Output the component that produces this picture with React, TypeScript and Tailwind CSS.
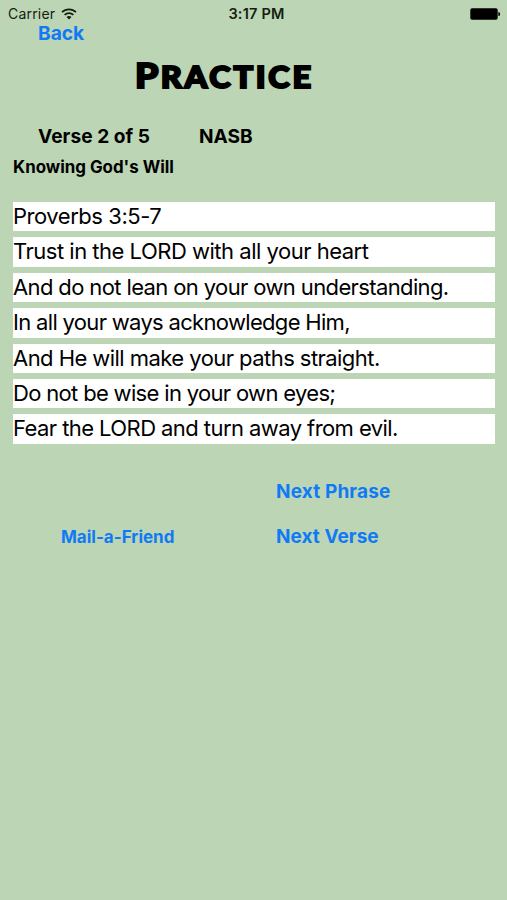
const lines = [
  { text: "Proverbs 3:5-7", spacing: "tracking-[-0.46px]" },
  { text: "Trust in the LORD with all your heart", spacing: "tracking-[-0.49px]" },
  { text: "And do not lean on your own understanding.", spacing: "tracking-[-0.62px]" },
  { text: "In all your ways acknowledge Him,", spacing: "tracking-[-0.68px]" },
  { text: "And He will make your paths straight.", spacing: "tracking-[-0.55px]" },
  { text: "Do not be wise in your own eyes;", spacing: "tracking-[-0.67px]" },
  { text: "Fear the LORD and turn away from evil.", spacing: "tracking-[-0.57px]" },
];

function WifiIcon() {
  return (
    <svg width="16" height="12" viewBox="0 0 16 12" fill="none" stroke="#14200f" strokeWidth="1.7">
      <path d="M1 4.2C4.9 0.3 11.1 0.3 15 4.2" />
      <path d="M3.6 6.9C6.1 4.5 9.9 4.5 12.4 6.9" />
      <path d="M5.5 8.9C6.9 7.6 9.1 7.6 10.5 8.9L8 11.5Z" fill="#14200f" stroke="none" />
    </svg>
  );
}

function BatteryIcon() {
  return (
    <svg width="31" height="12" viewBox="0 0 31 12" fill="#000">
      <rect x="0.3" y="0.3" width="27.4" height="11.4" rx="1.8" />
      <path d="M28.4 3.9C30.7 4.4 30.7 7.6 28.4 8.1Z" />
    </svg>
  );
}

export default function App() {
  return (
    <div className="h-[900px] w-[507px] overflow-hidden bg-[#bcd5b5] font-['Inter',sans-serif] text-black">
      {/* Status bar */}
      <div className="grid h-[23px] grid-cols-3 items-center pt-[5px] pl-[8px] pr-[6px] text-[#14200f]">
        <div className="flex items-center gap-[6px]">
          <span className="text-[14px] leading-4 tracking-[0.2px]">Carrier</span>
          <WifiIcon />
        </div>
        <span className="pl-1 text-center text-[14.5px] font-semibold leading-4 tracking-[0.2px]">3:17 PM</span>
        <div className="flex justify-end">
          <BatteryIcon />
        </div>
      </div>

      <button className="ml-[38px] block h-5 text-[19.2px] font-bold leading-5 text-[#107af6]">Back</button>

      <h1 className="mt-[9px] ml-[135px] h-[46px] w-[158px] origin-left scale-x-[1.1] whitespace-nowrap font-['Lato',sans-serif] text-[34px] font-black leading-[46px] tracking-[2px] [-webkit-text-stroke:2px_#000]">
        P<span className="text-[29.5px] tracking-[2.5px]">RACTICE</span>
      </h1>

      <div className="mt-[27px] flex h-[22px] items-center pl-[38px] text-[19.1px] font-bold">
        <span className="w-[161px] tracking-[0.05px]">Verse 2 of 5</span>
        <span>NASB</span>
      </div>
      <h2 className="mt-[10px] ml-[13px] h-5 text-[16.9px] font-bold leading-5">Knowing God's Will</h2>

      {/* Verse phrases */}
      <div className="mt-[25px] ml-[13px] flex w-[482px] flex-col gap-[6px]">
        {lines.map((line) => (
          <p key={line.text} className={`h-[29.4px] whitespace-nowrap bg-white text-[22px] leading-[29px] ${line.spacing}`}>
            {line.text}
          </p>
        ))}
      </div>

      {/* Actions */}
      <div className="mt-[37px] grid grid-cols-[215px_1fr] items-center gap-y-[23px] pl-[61px] text-left font-bold text-[#107af6]">
        <button className="col-start-2 h-[22px] text-left text-[19px] leading-[22px] tracking-[0.15px]">Next Phrase</button>
        <button className="h-[22px] text-left text-[17px] leading-[22px]">Mail-a-Friend</button>
        <button className="h-[22px] text-left text-[19px] leading-[22px] tracking-[0.05px]">Next Verse</button>
      </div>
    </div>
  );
}
